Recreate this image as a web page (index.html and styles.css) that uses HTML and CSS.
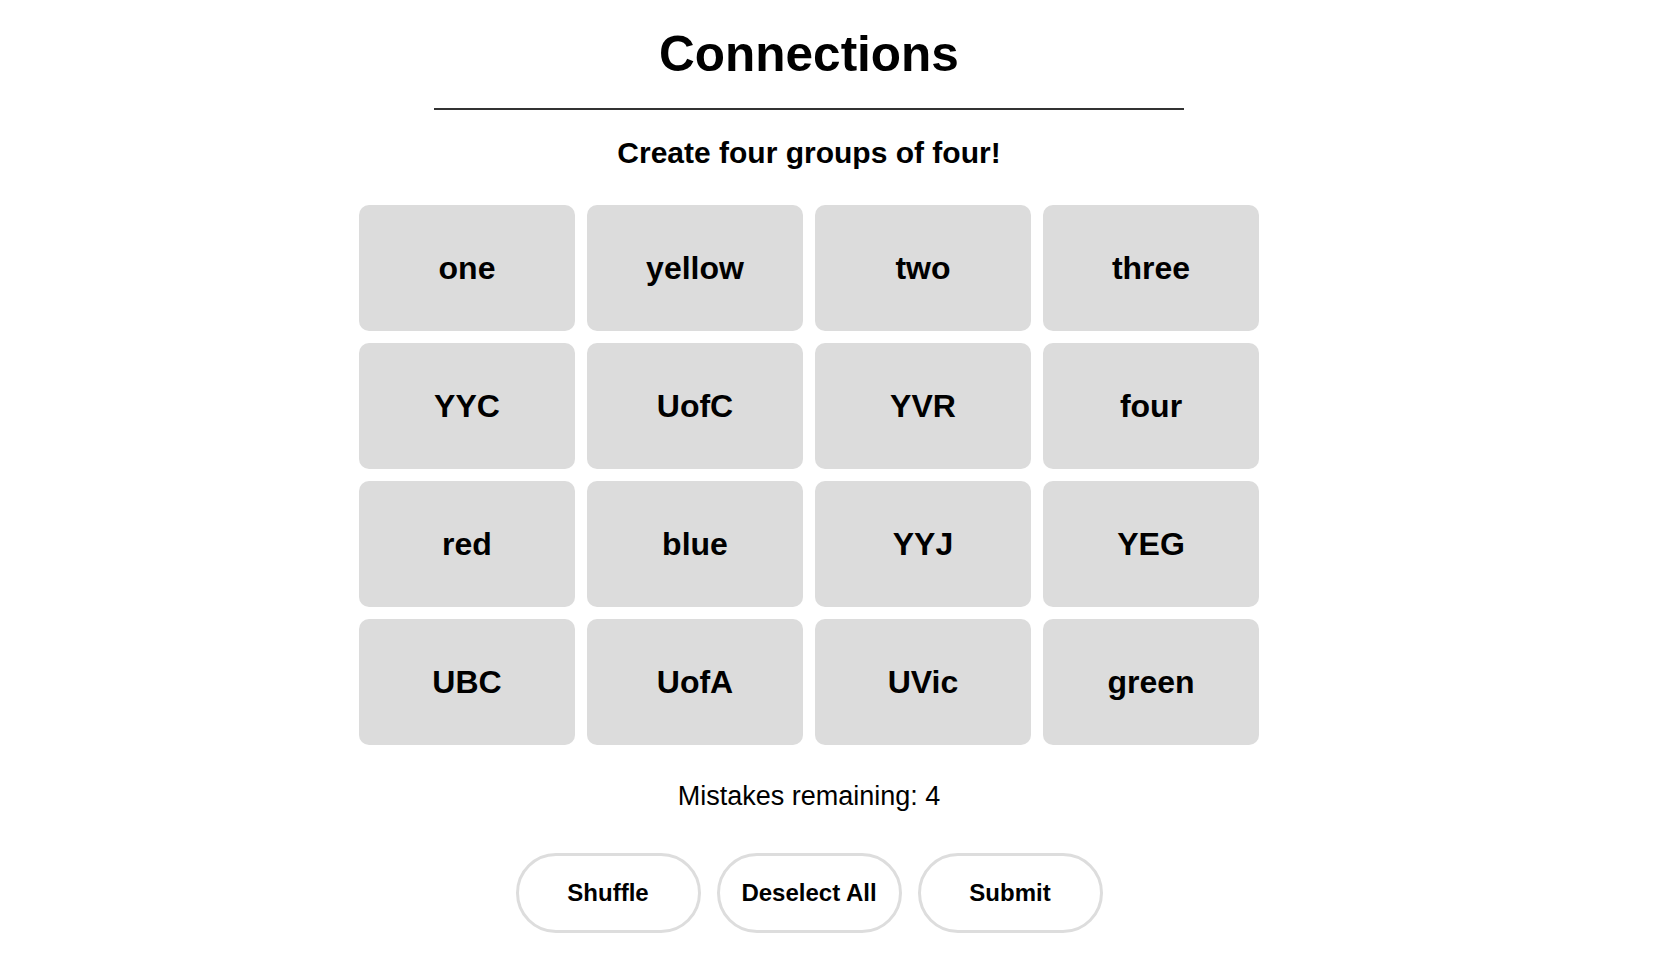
FILE: index.html
```html
<!DOCTYPE html>
<html lang="en">
<head>
<meta charset="utf-8">
<title>Connections</title>
<link rel="stylesheet" href="styles.css">
</head>
<body>
<div class="app">
  <header class="header">
    <h1 class="title">Connections</h1>
  </header>
  <p class="subtitle">Create four groups of four!</p>
  <div class="grid">
    <button class="tile">one</button>
    <button class="tile">yellow</button>
    <button class="tile">two</button>
    <button class="tile">three</button>
    <button class="tile">YYC</button>
    <button class="tile">UofC</button>
    <button class="tile">YVR</button>
    <button class="tile">four</button>
    <button class="tile">red</button>
    <button class="tile">blue</button>
    <button class="tile">YYJ</button>
    <button class="tile">YEG</button>
    <button class="tile">UBC</button>
    <button class="tile">UofA</button>
    <button class="tile">UVic</button>
    <button class="tile">green</button>
  </div>
  <p class="mistakes">Mistakes remaining: 4</p>
  <div class="actions">
    <button class="action">Shuffle</button>
    <button class="action">Deselect All</button>
    <button class="action">Submit</button>
  </div>
</div>
</body>
</html>
```

FILE: styles.css
```css
html, body {
  margin: 0;
  padding: 0;
  background: #ffffff;
}

body {
  font-family: "Liberation Sans", Arial, sans-serif;
  color: #000000;
}

.app {
  width: 1618px;
  display: flex;
  flex-direction: column;
  align-items: center;
}

.header {
  width: 750px;
  border-bottom: 2px solid #333333;
  display: flex;
  justify-content: center;
  padding-top: 26px;
  padding-bottom: 27px;
}

.title {
  margin: 0;
  font-size: 49.5px;
  font-weight: bold;
  line-height: 55px;
}

.subtitle {
  margin: 25px 0 0;
  font-size: 30px;
  font-weight: bold;
  line-height: 35px;
}

.grid {
  margin-top: 35px;
  display: grid;
  grid-template-columns: repeat(4, 216px);
  grid-auto-rows: 126px;
  gap: 12px;
}

.tile {
  border: none;
  border-radius: 10px;
  background: #dcdcdc;
  font-family: "Liberation Sans", Arial, sans-serif;
  font-size: 32px;
  font-weight: bold;
  color: #000000;
  padding: 0;
  cursor: pointer;
}

.mistakes {
  margin: 36px 0 0;
  font-size: 27px;
  line-height: 31px;
}

.actions {
  margin-top: 41px;
  display: flex;
  gap: 16px;
}

.action {
  width: 185px;
  height: 80px;
  border: 3px solid #dddddd;
  border-radius: 40px;
  background: #ffffff;
  font-family: "Liberation Sans", Arial, sans-serif;
  font-size: 24px;
  font-weight: bold;
  color: #000000;
  padding: 0;
  cursor: pointer;
}
```
